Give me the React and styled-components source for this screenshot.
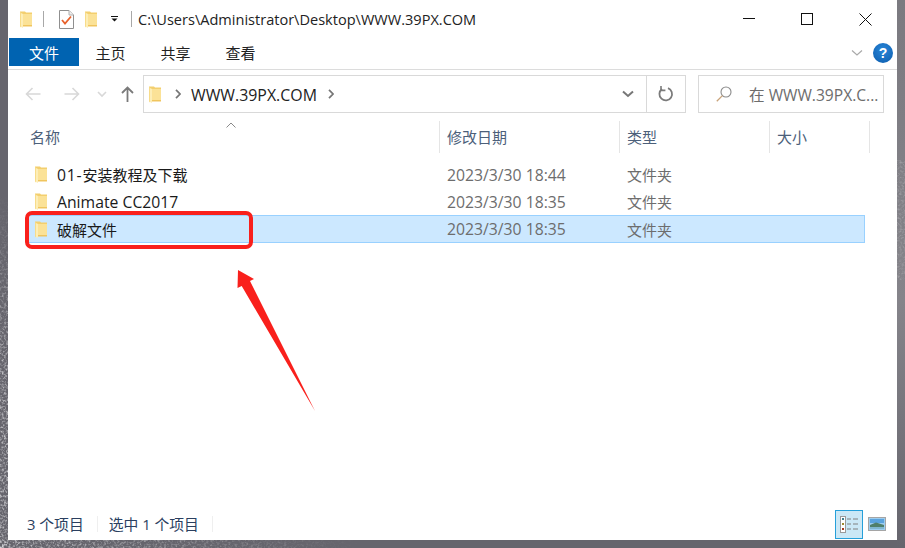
import React from 'react';
import styled, { createGlobalStyle } from 'styled-components';

const Global = createGlobalStyle`
  html, body { margin: 0; padding: 0; }
  body { width: 905px; height: 548px; overflow: hidden; background: #68676f; }
`;

const FONT = `"Open Sans", "Noto Sans CJK SC", sans-serif`;

const Page = styled.div`
  position: relative;
  width: 905px;
  height: 548px;
  box-sizing: border-box;
  padding: 0 8px 8px;
  overflow: hidden;
  font-family: ${FONT};
  font-size: 15px;
  color: #1a1a1a;
`;
const Backdrop = styled.svg`
  position: absolute;
  inset: 0;
`;
const Window = styled.div`
  position: relative;
  height: 540px;
  background: #fff;
  display: flex;
  flex-direction: column;
`;
const TitleBar = styled.div`
  height: 38px;
  flex: none;
  display: flex;
  align-items: center;
  padding-left: 12px;
`;
const QuickIcon = styled.svg`
  flex: none;
  display: block;
  margin-left: ${p => p.$ml || 0}px;
`;
const QuickSep = styled.span`
  flex: none;
  width: 1px;
  height: 16px;
  background: #a8a8a8;
  margin-left: ${p => p.$ml}px;
`;
const TitleText = styled.span`
  margin-left: 6px;
  font-size: 14.56px;
  color: #222;
  white-space: nowrap;
  flex: 1;
`;
const WinControls = styled.div`
  display: flex;
  align-items: center;
  margin-right: 25px;
  gap: 46px;
`;
const Ribbon = styled.div`
  height: 32px;
  flex: none;
  display: flex;
  align-items: flex-start;
  border-bottom: 1px solid #dcdcdc;
  padding-left: 1px;
  box-sizing: border-box;
`;
const FileTab = styled.div`
  width: 70px;
  height: 28px;
  margin-right: -1px;
  background: #0063b1;
  color: #fff;
  display: flex;
  align-items: center;
  justify-content: center;
  font-size: 15px;
`;
const Tab = styled.div`
  width: 65px;
  height: 28px;
  display: flex;
  align-items: center;
  justify-content: center;
  color: #222;
  font-size: 15px;
`;
const RibbonRight = styled.div`
  margin-left: auto;
  display: flex;
  align-items: center;
  height: 30px;
  margin-right: 4px;
  gap: 10px;
`;
const HelpBadge = styled.div`
  width: 20px;
  height: 20px;
  border-radius: 50%;
  background: radial-gradient(circle at 50% 35%, #2a86d8, #0b5cad);
  color: #fff;
  font-weight: 700;
  font-size: 14px;
  line-height: 20px;
  text-align: center;
  font-family: "Liberation Sans", sans-serif;
`;
const NavBar = styled.div`
  flex: none;
  height: 38px;
  margin-top: 5px;
  display: flex;
  align-items: center;
`;
const NavIcons = styled.div`
  width: 135px;
  flex: none;
  display: flex;
  align-items: center;
  padding-left: 17px;
  box-sizing: border-box;
`;
const AddressBox = styled.div`
  width: 543px;
  height: 38px;
  box-sizing: border-box;
  border: 1px solid #d9d9d9;
  display: flex;
  align-items: center;
  padding-left: 5px;
`;
const Crumb = styled.span`
  font-size: 15.9px;
  color: #222;
  padding-top: 1px;
  margin-left: ${p => p.$ml || 0}px;
`;
const AddressDrop = styled.div`
  margin-left: auto;
  width: 38px;
  height: 100%;
  flex: none;
  display: flex;
  align-items: center;
  justify-content: center;
  border-right: 1px solid #d9d9d9;
  box-sizing: border-box;
`;
const Refresh = styled.div`
  width: 38px;
  flex: none;
  height: 100%;
  display: flex;
  align-items: center;
  justify-content: center;
`;
const SearchBox = styled.div`
  width: 186px;
  height: 38px;
  margin-left: 12px;
  box-sizing: border-box;
  border: 1px solid #d9d9d9;
  display: flex;
  align-items: center;
  padding-left: 17px;
  color: #6d6d6d;
  font-size: 15.6px;
  white-space: nowrap;
`;
const SearchText = styled.span`
  margin-left: 17px;
`;
const HeaderRow = styled.div`
  position: relative;
  flex: none;
  margin-top: 8px;
  margin-left: 14px;
  height: 32px;
  display: grid;
  grid-template-columns: 418px 180px 150px 100px;
  width: 848px;
`;
const HeaderCell = styled.div`
  border-right: 1px solid #e5e5e5;
  padding-left: ${p => p.$pl || 7}px;
  padding-bottom: 2px;
  box-sizing: border-box;
  display: flex;
  align-items: center;
  color: #4c607a;
  font-size: 15px;
`;
const SortCaret = styled.svg`
  position: absolute;
  left: 204px;
  top: 1px;
`;
const FileList = styled.div`
  flex: 1;
  margin-top: 8px;
  margin-left: 19px;
  width: 838px;
  display: flex;
  flex-direction: column;
`;
const FileRow = styled.div`
  height: ${p => (p.$selected ? 28 : 27)}px;
  box-sizing: border-box;
  display: grid;
  grid-template-columns: 420px 180px 1fr;
  align-items: center;
  border: 1px solid ${p => (p.$selected ? '#99d1ff' : 'transparent')};
  background: ${p => (p.$selected ? '#cce8ff' : 'transparent')};
`;
const NameCell = styled.div`
  display: flex;
  align-items: center;
  color: #1a1a1a;
  font-size: 15px;
  margin-left: -1px;
  padding-left: 8px;
  gap: 10px;
`;
const Latin = styled.span`
  font-size: 15.75px;
  letter-spacing: ${p => p.$track || 0}px;
`;
const MetaCell = styled.div`
  color: #6d6d6d;
  font-size: ${p => (p.$latin ? 15.75 : 15)}px;
  margin-left: -1px;
`;
const StatusBar = styled.div`
  flex: none;
  height: 32px;
  display: flex;
  align-items: center;
  padding-left: 19px;
  color: #2b3f5f;
  font-size: 14.8px;
`;
const StatusItem = styled.span`
  padding-right: 13px;
  margin-right: 11px;
  border-right: 1px solid #efefef;
  line-height: 16px;
`;
const ViewSwitch = styled.div`
  margin-left: auto;
  display: flex;
  align-items: center;
  margin-right: 11px;
  gap: 5px;
`;
const ViewBtn = styled.div`
  width: 28px;
  height: 29px;
  box-sizing: border-box;
  border: 1px solid #26a0da;
  background: #cbe8f6;
  display: flex;
  align-items: center;
  justify-content: center;
`;
const Marker = styled.div`
  position: absolute;
  left: 17px;
  top: 211px;
  width: 228px;
  height: 38px;
  box-sizing: border-box;
  border: 4px solid #f9201c;
  border-radius: 7px;
`;
const Arrow = styled.svg`
  position: absolute;
  left: 228px;
  top: 268px;
`;

const Folder = ({ ml }) => (
  <QuickIcon $ml={ml} width="12" height="17" viewBox="0 0 12 17">
    <path d="M0 0.5 H5 L6 1.5 H12 V14 H0 Z" fill="#f3cf6f" />
    <path d="M0 1 L1 1.5 V16.5 L0 15.5 Z" fill="#f8dc8a" />
    <path d="M3 3 H12 V15 H3 Z" fill="#fbe297" />
    <path d="M1 2 L3 3 V17 L1 16 Z" fill="#fdeeb7" />
    <path d="M3 14 H12 V15.5 H3 Z" fill="#f0c55e" />
  </QuickIcon>
);

const ChevronDownSmall = ({ c = '#777', sw = 2 }) => (
  <QuickIcon width="12" height="8" viewBox="0 0 12 8">
    <path d="M1 1.5 L6 6 L11 1.5" fill="none" stroke={c} strokeWidth={sw} />
  </QuickIcon>
);
const ChevronRight = ({ ml }) => (
  <QuickIcon $ml={ml} width="6" height="10" viewBox="0 0 6 10">
    <path d="M1 0.8 L5 5 L1 9.2" fill="none" stroke="#767676" strokeWidth="1.7" />
  </QuickIcon>
);

const rows = [
  { name: <span><Latin $track={0.8}>01-</Latin>安装教程及下载</span>, id: 'a', date: '2023/3/30 18:44' },
  { name: <Latin>Animate CC2017</Latin>, id: 'b', date: '2023/3/30 18:35' },
  { name: '破解文件', id: 'c', date: '2023/3/30 18:35', selected: true },
];

export default function App() {
  return (
    <Page>
      <Global />
      <Backdrop width="905" height="548" viewBox="0 0 905 548">
        <defs>
          <filter id="speck" x="0" y="0" width="100%" height="100%">
            <feTurbulence type="fractalNoise" baseFrequency="0.45" numOctaves="2" seed="7" />
            <feColorMatrix values="0 0 0 0 0.85  0 0 0 0 0.85  0 0 0 0 0.87  1.9 0 0 0 -0.85" />
          </filter>
          <linearGradient id="side" x1="0" y1="0" x2="0" y2="1">
            <stop offset="0" stopColor="#7b7a80" />
            <stop offset="0.55" stopColor="#85848a" />
            <stop offset="1" stopColor="#66656d" />
          </linearGradient>
          <linearGradient id="fadeL" x1="0" y1="0" x2="0" y2="1">
            <stop offset="0.35" stopColor="#000" />
            <stop offset="0.7" stopColor="#fff" />
          </linearGradient>
          <linearGradient id="fadeB" x1="0" y1="0" x2="1" y2="0">
            <stop offset="0" stopColor="#fff" />
            <stop offset="0.4" stopColor="#000" />
          </linearGradient>
          <mask id="leftMask"><rect x="0" y="0" width="8" height="548" fill="url(#fadeL)" /></mask>
          <mask id="botMask"><rect x="0" y="540" width="905" height="8" fill="url(#fadeB)" /></mask>
        </defs>
        <rect x="0" y="0" width="905" height="548" fill="#66656d" />
        <rect x="897" y="0" width="8" height="548" fill="url(#side)" />
        <rect x="0" y="0" width="8" height="548" filter="url(#speck)" mask="url(#leftMask)" />
        <rect x="0" y="540" width="905" height="8" filter="url(#speck)" mask="url(#botMask)" />
        <rect x="897" y="160" width="8" height="120" filter="url(#speck)" opacity="0.35" />
      </Backdrop>
      <Window>
        <TitleBar>
          <Folder />
          <QuickSep $ml={11} />
          <QuickIcon $ml={15} width="15" height="19" viewBox="0 0 15 19">
            <path d="M0.5 0.5 H10 L14.5 5 V18.5 H0.5 Z" fill="#fff" stroke="#8f8f8f" />
            <path d="M10 0.5 V5 H14.5" fill="#eee" stroke="#b0b0b0" />
            <path d="M3 10 L6 13.5 L12 6.5" fill="none" stroke="#e8622c" strokeWidth="1.8" />
          </QuickIcon>
          <Folder ml={11} />
          <QuickIcon $ml={14} width="7" height="6" viewBox="0 0 7 6">
            <rect x="0" y="0" width="7" height="1" fill="#111" />
            <path d="M0.5 2.5 H6.5 L3.5 5.5 Z" fill="#111" />
          </QuickIcon>
          <QuickSep $ml={13} />
          <TitleText>C:\Users\Administrator\Desktop\WWW.39PX.COM</TitleText>
          <WinControls>
            <QuickIcon width="12" height="12" viewBox="0 0 12 12">
              <rect x="0" y="5" width="12" height="1" fill="#111" />
            </QuickIcon>
            <QuickIcon width="12" height="12" viewBox="0 0 12 12">
              <rect x="0.5" y="0.5" width="11" height="11" fill="none" stroke="#111" />
            </QuickIcon>
            <QuickIcon width="13" height="13" viewBox="0 0 13 13">
              <path d="M0.5 0.5 L12.5 12.5 M12.5 0.5 L0.5 12.5" stroke="#111" strokeWidth="1" />
            </QuickIcon>
          </WinControls>
        </TitleBar>
        <Ribbon>
          <FileTab>文件</FileTab>
          <Tab>主页</Tab>
          <Tab>共享</Tab>
          <Tab>查看</Tab>
          <RibbonRight>
            <ChevronDownSmall c="#a9a9a9" sw={1.2} />
            <HelpBadge>?</HelpBadge>
          </RibbonRight>
        </Ribbon>
        <NavBar>
          <NavIcons>
            <QuickIcon width="16" height="14" viewBox="0 0 16 14">
              <path d="M15.5 7 H1.5 M7.5 1 L1.5 7 L7.5 13" fill="none" stroke="#d8d8d8" strokeWidth="1.6" />
            </QuickIcon>
            <QuickIcon $ml={23} width="16" height="14" viewBox="0 0 16 14">
              <path d="M0.5 7 H14.5 M8.5 1 L14.5 7 L8.5 13" fill="none" stroke="#d8d8d8" strokeWidth="1.6" />
            </QuickIcon>
            <QuickIcon $ml={17} width="10" height="7" viewBox="0 0 10 7">
              <path d="M1 1 L5 5 L9 1" fill="none" stroke="#d8d8d8" strokeWidth="1.6" />
            </QuickIcon>
            <QuickIcon $ml={14} width="13" height="16" viewBox="0 0 13 16">
              <path d="M6.5 16 V2 M1 7 L6.5 1.5 L12 7" fill="none" stroke="#7a7a7a" strokeWidth="1.8" />
            </QuickIcon>
          </NavIcons>
          <AddressBox>
            <Folder />
            <ChevronRight ml={14} />
            <Crumb $ml={10}>WWW.39PX.COM</Crumb>
            <ChevronRight ml={11} />
            <AddressDrop><ChevronDownSmall /></AddressDrop>
            <Refresh>
              <QuickIcon width="16" height="16" viewBox="0 0 16 16">
                <path d="M10 2.2 A6.3 6.3 0 1 1 4 3" fill="none" stroke="#7b7b7b" strokeWidth="1.8" />
                <path d="M3 0 V4.4 H7.4" fill="none" stroke="#7b7b7b" strokeWidth="1.6" />
              </QuickIcon>
            </Refresh>
          </AddressBox>
          <SearchBox>
            <QuickIcon width="16" height="16" viewBox="0 0 16 16">
              <circle cx="10" cy="6" r="5" fill="none" stroke="#8b8b8b" strokeWidth="1.1" />
              <path d="M6.4 9.6 L0.8 15.2" stroke="#c9a37a" strokeWidth="1.3" />
            </QuickIcon>
            <SearchText>在 WWW.39PX.C...</SearchText>
          </SearchBox>
        </NavBar>
        <HeaderRow>
          <SortCaret width="10" height="6" viewBox="0 0 10 6">
            <path d="M0.5 5.5 L5 1 L9.5 5.5" fill="none" stroke="#8a8a8a" />
          </SortCaret>
          <HeaderCell $pl={8}>名称</HeaderCell>
          <HeaderCell>修改日期</HeaderCell>
          <HeaderCell>类型</HeaderCell>
          <HeaderCell>大小</HeaderCell>
        </HeaderRow>
        <FileList>
          {rows.map(r => (
            <FileRow key={r.id} $selected={r.selected}>
              <NameCell><Folder />{r.name}</NameCell>
              <MetaCell $latin>{r.date}</MetaCell>
              <MetaCell>文件夹</MetaCell>
            </FileRow>
          ))}
        </FileList>
        <StatusBar>
          <StatusItem>3 个项目</StatusItem>
          <StatusItem>选中 1 个项目</StatusItem>
          <ViewSwitch>
            <ViewBtn>
              <QuickIcon width="19" height="17" viewBox="0 0 19 17">
                <rect x="0.5" y="0.5" width="5" height="16" fill="#fff" stroke="#9a9a9a" />
                <rect x="2" y="2" width="2" height="2" fill="#3f7f8f" />
                <rect x="2" y="7" width="2" height="2" fill="#a08a30" />
                <rect x="2" y="12" width="2" height="2" fill="#a83a20" />
                <path d="M7 3 H11 M13 3 H18 M7 8 H11 M13 8 H18 M7 13 H11 M13 13 H18" stroke="#808080" />
              </QuickIcon>
            </ViewBtn>
            <QuickIcon width="18" height="14" viewBox="0 0 18 14">
              <rect x="0.5" y="0.5" width="17" height="13" fill="#9ccdf0" stroke="#a5a5a5" />
              <rect x="2" y="2" width="14" height="4" fill="#5aa3de" />
              <path d="M2 8 L8 5.5 L16 8 V12 H2 Z" fill="#4f7f6a" />
              <path d="M2 10 H16 V12 H2 Z" fill="#7fb6cf" />
            </QuickIcon>
          </ViewSwitch>
        </StatusBar>
        <Marker />
        <Arrow width="82" height="146" viewBox="0 0 82 146">
          <path d="M2 2 L18 11 L14 13 L79 143 L5.7 18 L1.5 20 Z" fill="#f9201c" />
        </Arrow>
      </Window>
    </Page>
  );
}
